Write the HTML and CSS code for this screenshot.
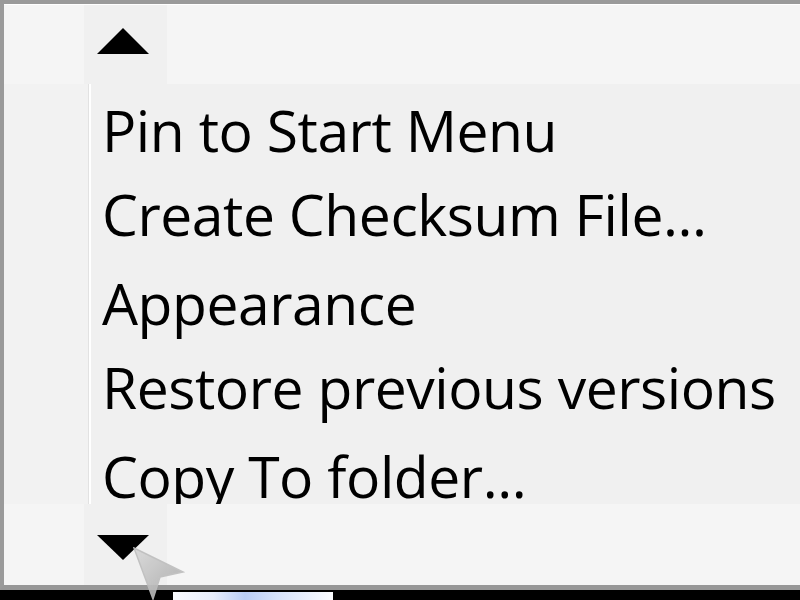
FILE: index.html
```html
<!DOCTYPE html>
<html>
<head>
<meta charset="utf-8">
<link rel="stylesheet" href="styles.css">
</head>
<body>
<div class="frame">
  <div class="scroll scroll-top">
    <div class="arrow-cell">
      <svg width="54" height="28" viewBox="0 0 54 28"><polygon points="1,26 27,0 53,26" fill="#000"/></svg>
    </div>
  </div>
  <div class="menu">
    <div class="gutter"></div>
    <div class="items">
      <div class="item">Pin to Start Menu</div>
      <div class="item">Create Checksum File...</div>
      <div class="sep"></div>
      <div class="item">Appearance</div>
      <div class="item">Restore previous versions</div>
      <div class="sep"></div>
      <div class="item">Copy To folder...</div>
    </div>
  </div>
  <div class="scroll scroll-bottom">
    <div class="arrow-cell">
      <svg width="54" height="28" viewBox="0 0 54 28"><polygon points="1,2 53,2 27,27" fill="#000"/></svg>
    </div>
  </div>
</div>
<div class="taskbar">
  <div class="glow"></div>
</div>
<svg class="cursor" width="60" height="60" viewBox="0 0 60 60">
  <defs>
    <linearGradient id="cg" x1="0" y1="0" x2="1" y2="1">
      <stop offset="0" stop-color="#d8d8d8"/>
      <stop offset="1" stop-color="#a8a8a8"/>
    </linearGradient>
  </defs>
  <polygon points="1,1 50,25 27,30 20,52" fill="url(#cg)" stroke="#bdbdbd" stroke-width="1.5" opacity="0.9"/>
</svg>
</body>
</html>
```
FILE: styles.css
```css
html, body {
  margin: 0;
  padding: 0;
  background: #000;
  width: 800px;
  height: 600px;
  overflow: hidden;
  position: relative;
}
.frame {
  width: 796px;
  height: 581px;
  border-top: 4px solid #9a9a9a;
  border-left: 4px solid #9a9a9a;
  border-bottom: 5px solid #979797;
  display: flex;
  flex-direction: column;
  background: #f5f5f5;
}
.scroll {
  height: 80px;
  background: #f5f5f5;
  display: flex;
  flex: none;
}
.scroll-top {
  border-top: 1px solid #fff;
  height: 79px;
}
.scroll-bottom {
  height: 81px;
}
.arrow-cell {
  margin-left: 80px;
  width: 83px;
  background: #f0f0f0;
  position: relative;
}
.scroll-top .arrow-cell svg {
  position: absolute;
  left: 12px;
  top: 23px;
}
.scroll-bottom .arrow-cell svg {
  position: absolute;
  left: 12px;
  top: 29px;
}
.menu {
  height: 420px;
  flex: none;
  display: flex;
  overflow: hidden;
  background: #f0f0f0;
}
.gutter {
  width: 84px;
  flex: none;
  background: #f2f2f2;
  border-right: 1px solid #e2e2e2;
  box-shadow: 2px 0 0 #fff;
  margin-right: 3px;
}
.items {
  padding-top: 4px;
  padding-left: 10px;
  font-family: "Open Sans", "Noto Sans", sans-serif;
  font-size: 57px;
  letter-spacing: -0.45px;
  color: #000;
}
.item {
  height: 84px;
  line-height: 84px;
  white-space: nowrap;
}
.sep {
  height: 5px;
}
.taskbar {
  height: 10px;
  position: relative;
}
.glow {
  position: absolute;
  left: 173px;
  top: 2px;
  width: 160px;
  height: 8px;
  background: linear-gradient(90deg, #fafbff 0%, #e8eefc 25%, #b9cdf5 45%, #d6e2fa 65%, #fbfcff 100%);
}
.cursor {
  position: absolute;
  left: 133px;
  top: 547px;
}
```
